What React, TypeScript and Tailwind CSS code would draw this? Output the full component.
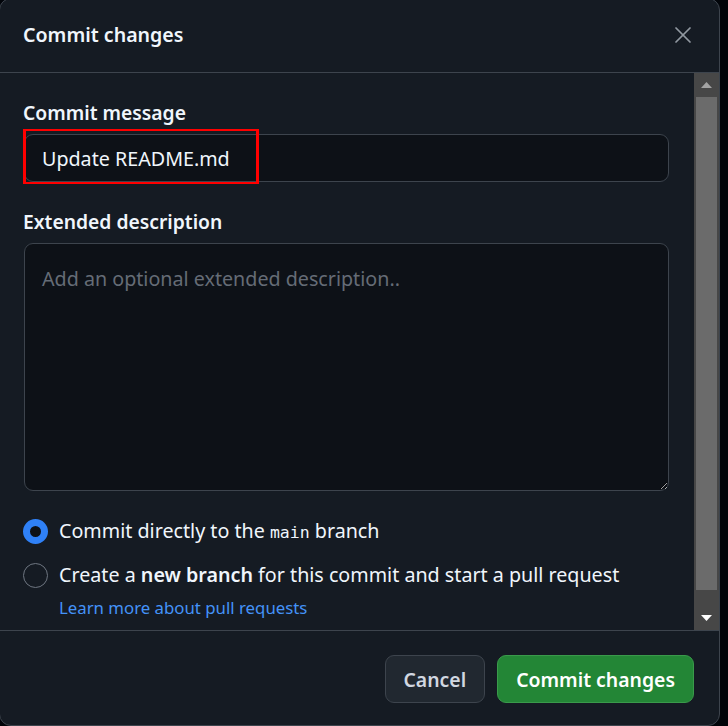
import { X } from 'lucide-react';

const sans = 'font-["Noto_Sans","Liberation_Sans",sans-serif]';

function Radio({ checked }: { checked?: boolean }) {
  return checked ? (
    <span className="size-[25px] shrink-0 rounded-full border-[7px] border-[#2f81f7] bg-[#0d1117]" />
  ) : (
    <span className="size-[25px] shrink-0 rounded-full border-[1.5px] border-[#6e7681]" />
  );
}

function Scrollbar() {
  return (
    <div className="flex w-[25px] shrink-0 flex-col bg-[#474747]">
      <div className="flex h-[24px] items-center justify-center">
        <svg width="11" height="6" viewBox="0 0 11 6" aria-hidden>
          <path d="M0 6 L5.5 0 L11 6 Z" fill="#a3a3a3" />
        </svg>
      </div>
      <div className="mx-[2px] h-[493px] bg-[#6b6b6b]" />
      <div className="flex-1" />
      <div className="flex h-[25px] items-center justify-center">
        <svg width="11" height="6" viewBox="0 0 11 6" aria-hidden>
          <path d="M0 0 L11 0 L5.5 6 Z" fill="#ffffff" />
        </svg>
      </div>
    </div>
  );
}

export default function App() {
  return (
    <div className={`h-[726px] w-[728px] overflow-hidden bg-[#010409] ${sans}`}>
      <div className="-mt-[2px] -ml-px flex h-[728px] w-[721px] flex-col overflow-hidden rounded-xl border border-[#3d444d] bg-[#151b23] text-[#f0f6fc]">
        {/* header */}
        <div className="flex h-[74px] shrink-0 items-center justify-between border-b border-[#3d444d] pr-[22px] pb-[2px] pl-[23px]">
          <h2 className="text-[19.6px] font-semibold">Commit changes</h2>
          <button type="button" className="flex size-7 items-center justify-center text-[#9198a1]">
            <X className="size-[28px]" strokeWidth={1.5} />
          </button>
        </div>

        {/* body */}
        <div className="flex min-h-0 flex-1">
          <div className="flex-1 pt-[25px] pr-[25px] pl-[24px]">
            <label className="-ml-px block text-[19.3px] leading-[30px] font-semibold">Commit message</label>
            <div className="relative mt-[6px]">
              <input
                readOnly
                defaultValue="Update README.md"
                className="h-[48px] w-full rounded-[9px] border border-[#3d444d] bg-[#0d1117] px-[17px] text-[19.7px] text-[#f0f6fc] outline-none"
              />
              <div className="pointer-events-none absolute -top-[5px] -left-[1px] h-[55px] w-[236px] border-x-[3px] border-y-2 border-[#ff0000]" />
            </div>

            <label className="mt-[25px] -ml-px block text-[19.3px] leading-[30px] font-semibold">
              Extended description
            </label>
            <textarea
              placeholder="Add an optional extended description.."
              className="mt-[6px] block h-[248px] w-full resize-y rounded-[9px] border border-[#3d444d] bg-[#0d1117] px-[17px] pt-[20px] text-[19.7px] leading-[30px] text-[#f0f6fc] outline-none [color-scheme:dark] placeholder:text-[#656c76]"
            />

            <div className="mt-[25px] -ml-px">
              <div className="flex h-[30px] items-center gap-[11px]">
                <Radio checked />
                <span className="text-[19.7px]">
                  Commit directly to the{' '}
                  <code className='font-["DejaVu_Sans_Mono",monospace] text-[16.5px]'>main</code> branch
                </span>
              </div>
              <div className="mt-[14px] flex h-[30px] items-center gap-[11px]">
                <Radio />
                <span className="text-[19.7px]">
                  Create a <b className="font-semibold">new branch</b> for this commit and start a pull request
                </span>
              </div>
              <a href="#" className="mt-[4px] ml-[36px] block text-[16.8px] leading-[27px] text-[#4493f8]">
                Learn more about pull requests
              </a>
            </div>
          </div>
          <Scrollbar />
        </div>

        {/* footer */}
        <div className="flex h-[95px] shrink-0 justify-end gap-[12px] border-t border-[#3d444d] pt-[24px] pr-[25px]">
          <button
            type="button"
            className="h-[48px] rounded-[9px] border border-[#3d444d] bg-[#212830] px-[18px] pt-px text-[19.4px] font-semibold text-[#d1d7e0]"
          >
            Cancel
          </button>
          <button
            type="button"
            className="h-[48px] rounded-[9px] border border-[#3a9a4b] bg-[#238636] px-[18px] pt-px text-[19.4px] font-semibold text-white"
          >
            Commit changes
          </button>
        </div>
      </div>
    </div>
  );
}
